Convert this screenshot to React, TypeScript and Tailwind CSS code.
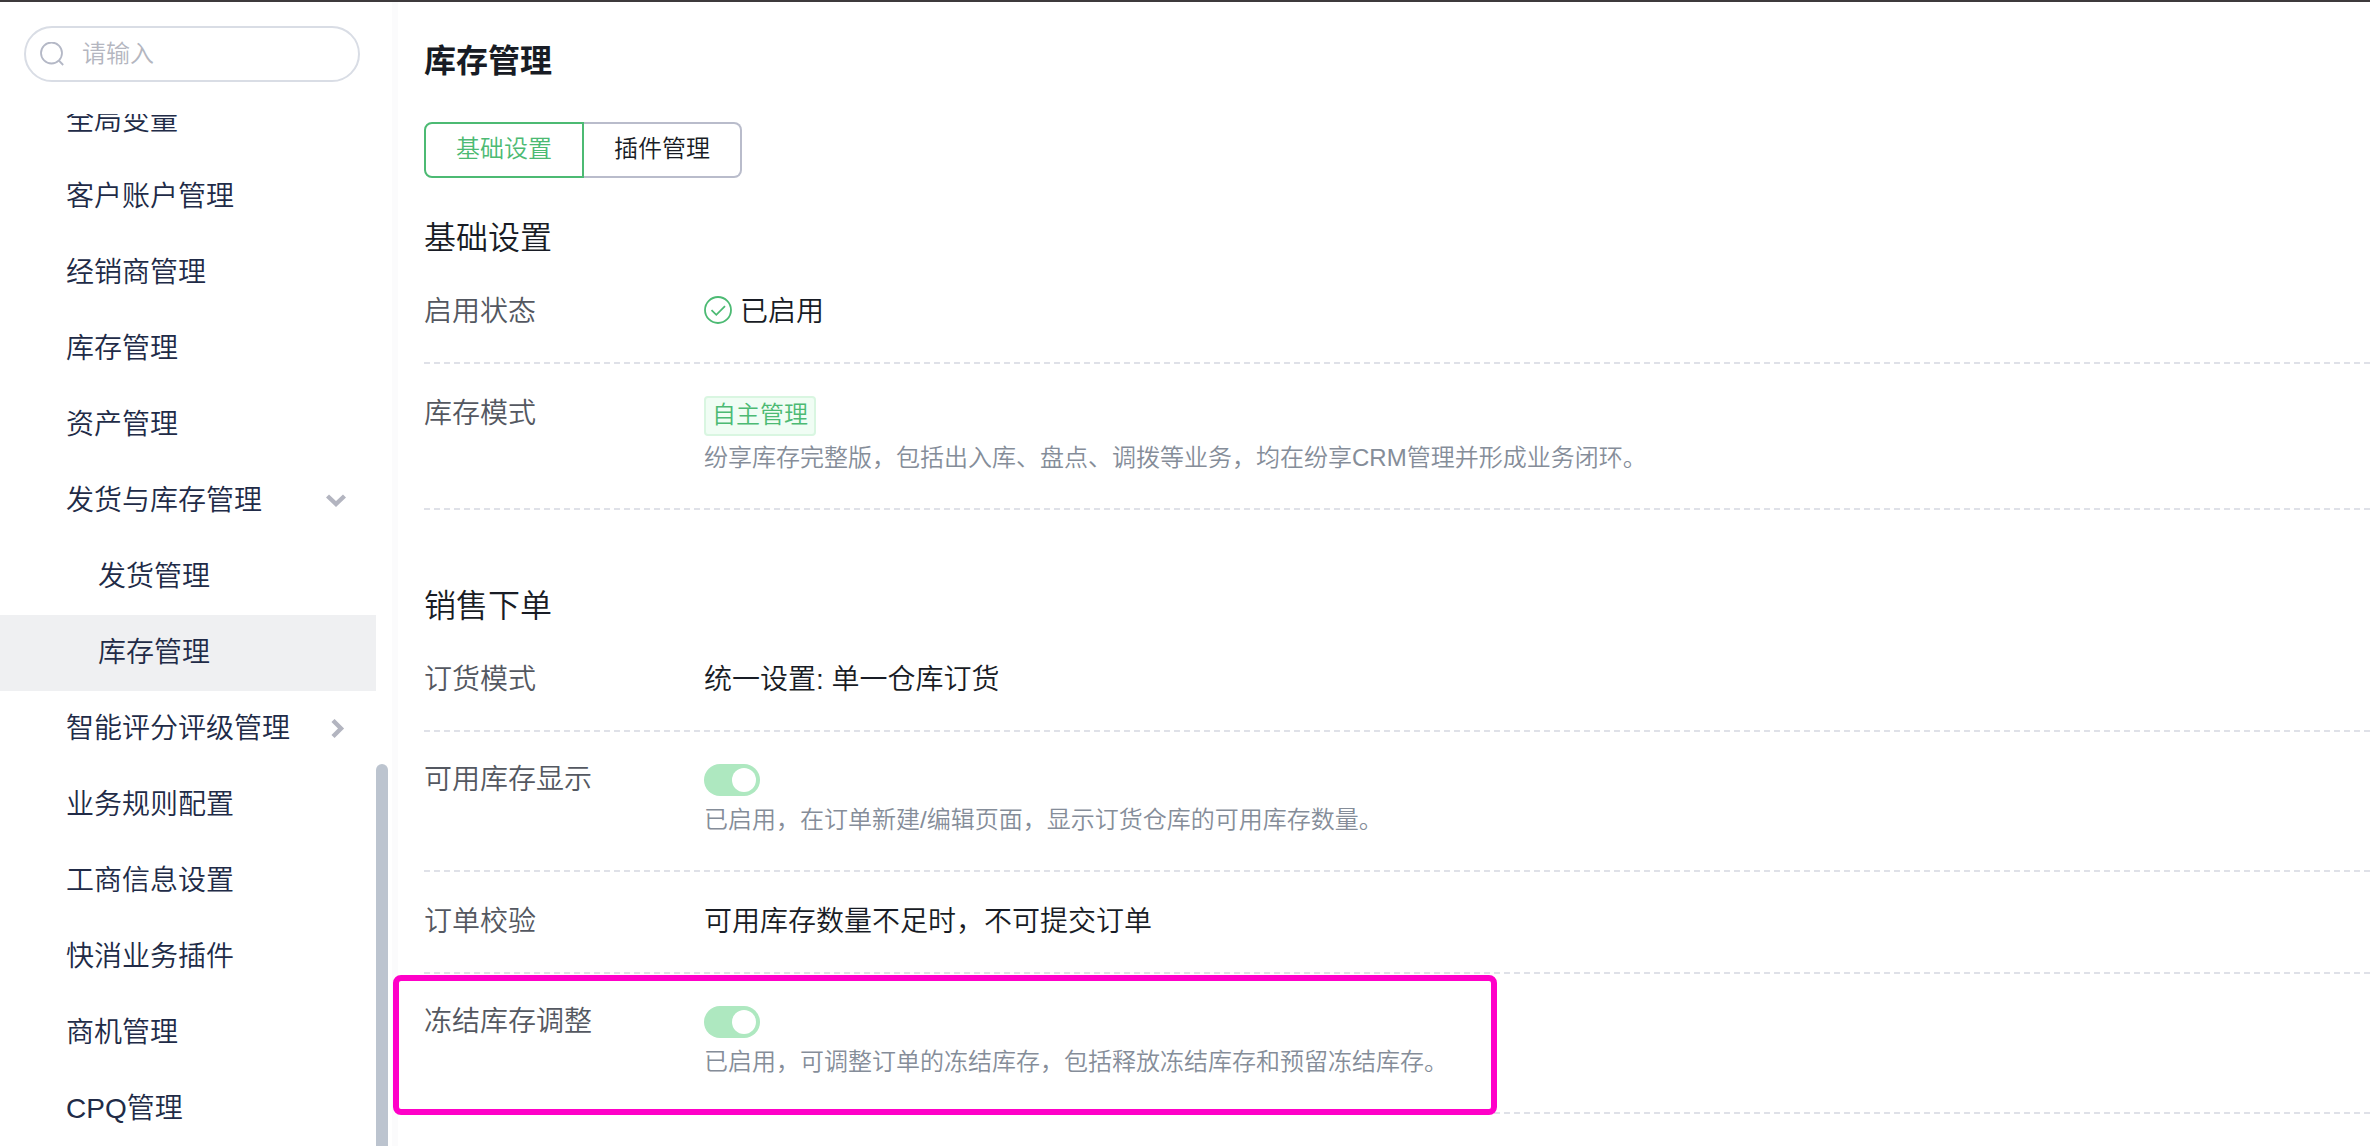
import { useState, type ReactNode } from 'react';
import { clsx } from 'clsx';

type NavItem = {
  name: string;
  href: string;
  child?: boolean;
  arrow?: 'down' | 'right';
};

const navigation: NavItem[] = [
  { name: '全局变量', href: '#global-vars' },
  { name: '客户账户管理', href: '#accounts' },
  { name: '经销商管理', href: '#dealers' },
  { name: '库存管理', href: '#inventory' },
  { name: '资产管理', href: '#assets' },
  { name: '发货与库存管理', href: '#delivery-stock', arrow: 'down' },
  { name: '发货管理', href: '#delivery', child: true },
  { name: '库存管理', href: '#stock', child: true },
  { name: '智能评分评级管理', href: '#scoring', arrow: 'right' },
  { name: '业务规则配置', href: '#rules' },
  { name: '工商信息设置', href: '#business-info' },
  { name: '快消业务插件', href: '#fmcg' },
  { name: '商机管理', href: '#opportunity' },
  { name: 'CPQ管理', href: '#cpq' },
];

const tabs = ['基础设置', '插件管理'];

function SearchIcon() {
  return (
    <svg className="w-6 h-6 shrink-0" viewBox="0 0 24 24" fill="none" stroke="#b4b8c6" strokeWidth="1.8" aria-hidden="true">
      <circle cx="11.5" cy="11" r="10.5" />
      <path d="M18.8 18.5l4.4 4.5" />
    </svg>
  );
}

function CheckIcon() {
  return (
    <svg className="w-7 h-7 mt-1" viewBox="0 0 28 28" fill="none" stroke="#4cba73" strokeWidth="1.8" aria-hidden="true">
      <circle cx="14" cy="14" r="13" />
      <path d="M7.5 14.2l4.8 4.6 8.7-8.6" />
    </svg>
  );
}

function Arrow({ dir }: { dir: 'down' | 'right' }) {
  return (
    <svg className="w-5 h-5" viewBox="0 0 20 20" fill="none" stroke="#b3b5c0" strokeWidth="4.4" aria-hidden="true">
      <path d={dir === 'down' ? 'M1.5 5l8.5 8 8.5-8' : 'M7 1.5l8 8-8 8'} />
    </svg>
  );
}

function Sidebar() {
  const [active, setActive] = useState('#stock');

  return (
    <aside className="flex flex-col w-[398px] shrink-0 border-r-[6px] border-[#fbfbfc]">
      <label className="flex items-center gap-[18px] h-14 ml-6 mr-8 mt-6 px-[14px] rounded-full border-2 border-[#d9dde5] shrink-0">
        <SearchIcon />
        <input
          type="text"
          aria-label="搜索"
          placeholder="请输入"
          className="w-full min-w-0 outline-none text-2xl placeholder:text-[#b4b6c0]"
        />
      </label>

      <div className="flex flex-1 min-h-0 mt-8 pr-1">
        <nav className="flex-1 overflow-hidden">
          {/* list is scrolled, first entry is partly hidden */}
          <ul className="-mt-[31px]">
            {navigation.map((item) => (
              <li key={item.href}>
                <a
                  href={item.href}
                  onClick={() => setActive(item.href)}
                  className={clsx(
                    'flex items-center justify-between h-[76px] pr-[30px] text-[28px] text-[#212b47]',
                    item.child ? 'pl-[98px]' : 'pl-[66px]',
                    active === item.href && 'bg-[#eff0f2]'
                  )}
                >
                  {item.name}
                  {item.arrow && <Arrow dir={item.arrow} />}
                </a>
              </li>
            ))}
          </ul>
        </nav>
        <div className="flex items-end w-3">
          <div className="w-full h-[37%] rounded-t-full bg-[#bcc4cf]" />
        </div>
      </div>
    </aside>
  );
}

function Section({ title, children }: { title: string; children: ReactNode }) {
  return (
    <section>
      <h2 className="text-[32px] leading-[48px]">{title}</h2>
      {children}
    </section>
  );
}

function Row({ label, children }: { label: string; children: ReactNode }) {
  return (
    <div className="flex py-[30px] border-b-2 border-dashed border-[#dfe1e8] text-[28px] leading-10">
      <div className="w-[280px] shrink-0 text-[#545861]">{label}</div>
      <div>{children}</div>
    </div>
  );
}

function Hint({ children }: { children: ReactNode }) {
  return <p className="mt-1 pb-[2px] text-2xl leading-9 text-[#858d99]">{children}</p>;
}

type SwitchRowProps = {
  id: string;
  label: string;
  hint: string;
  highlight?: boolean;
};

function SwitchRow({ id, label, hint, highlight }: SwitchRowProps) {
  return (
    <div className="relative flex pt-7 pb-[30px] border-b-2 border-dashed border-[#dfe1e8] text-[28px] leading-10">
      <label htmlFor={id} className="w-[280px] shrink-0 text-[#545861]">
        {label}
      </label>
      <div>
        <input
          id={id}
          type="checkbox"
          role="switch"
          defaultChecked
          className="block appearance-none mt-1 mb-[6px] w-14 h-8 p-1 rounded-full bg-gray-300 checked:bg-[#aee8c0] before:block before:w-6 before:h-6 before:rounded-full before:bg-white checked:before:ml-6"
        />
        <Hint>{hint}</Hint>
      </div>
      {highlight && (
        <div className="absolute -left-[31px] top-px w-[1104px] h-[140px] border-[6px] border-[#ff00c8] rounded-lg pointer-events-none" />
      )}
    </div>
  );
}

export default function App() {
  const [tab, setTab] = useState(tabs[0]);

  return (
    <div
      lang="zh-CN"
      className="flex h-screen overflow-hidden bg-white border-t-2 border-[#3d3a3c] text-[#181c25] font-['Liberation_Sans','Noto_Sans_CJK_SC',sans-serif] font-[350]"
    >
      <Sidebar />

      <main className="flex-1 min-w-0 pl-[26px] pt-[35px]">
        <h1 className="text-[32px] leading-[48px] font-bold">库存管理</h1>

        <div className="flex mt-[37px] text-2xl">
          {tabs.map((name) => (
            <button
              key={name}
              type="button"
              onClick={() => setTab(name)}
              className={clsx(
                'h-14 px-[30px] pb-[2px] border-y-2 first:border-l-2 border-r-2 first:rounded-l-lg last:rounded-r-lg',
                tab === name ? 'border-[#4cba73] text-[#4cba73]' : 'border-[#b9bccb]'
              )}
            >
              {name}
            </button>
          ))}
        </div>

        <div className="flex flex-col gap-[72px] mt-9">
          <Section title="基础设置">
            <Row label="启用状态">
              <div className="flex items-start gap-2">
                <CheckIcon />
                已启用
              </div>
            </Row>
            <Row label="库存模式">
              <span className="block w-fit h-10 mt-[2px] px-[6px] border-2 border-[#d9f6e1] rounded bg-[#f0fdf4] text-2xl leading-[34px] text-[#4cba73]">
                自主管理
              </span>
              <Hint>纷享库存完整版，包括出入库、盘点、调拨等业务，均在纷享CRM管理并形成业务闭环。</Hint>
            </Row>
          </Section>

          <Section title="销售下单">
            <Row label="订货模式">统一设置: 单一仓库订货</Row>
            <SwitchRow
              id="stock-display"
              label="可用库存显示"
              hint="已启用，在订单新建/编辑页面，显示订货仓库的可用库存数量。"
            />
            <Row label="订单校验">可用库存数量不足时，不可提交订单</Row>
            <SwitchRow
              id="freeze-adjust"
              label="冻结库存调整"
              hint="已启用，可调整订单的冻结库存，包括释放冻结库存和预留冻结库存。"
              highlight
            />
          </Section>
        </div>
      </main>
    </div>
  );
}
